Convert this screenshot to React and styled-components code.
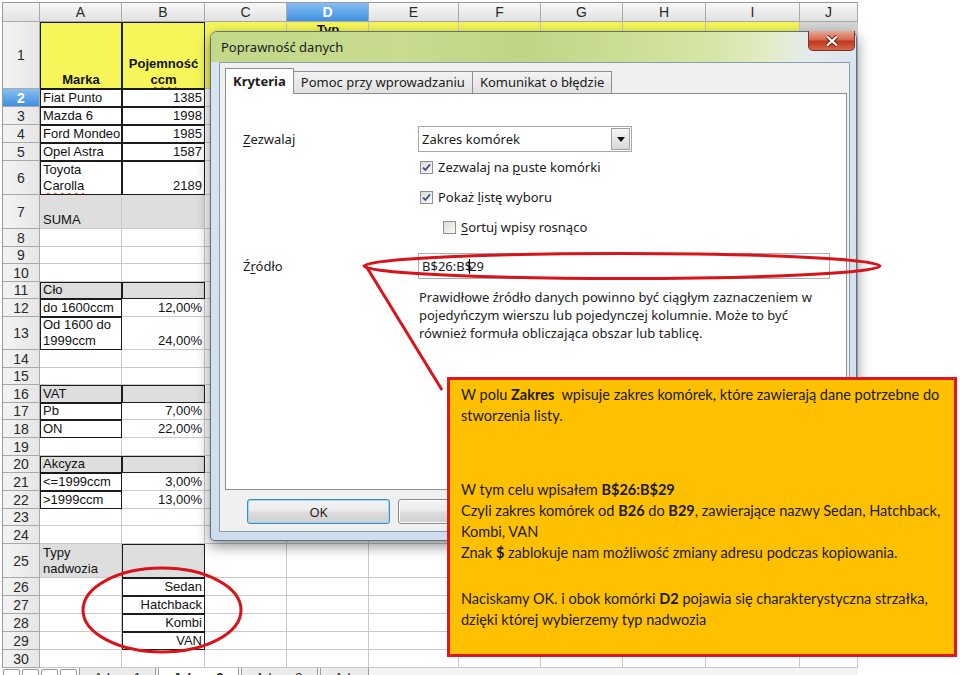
import styled, { createGlobalStyle, css } from "styled-components";

const COLS = ["A", "B", "C", "D", "E", "F", "G", "H", "I", "J"];
const COL_W = [82, 83, 82, 82, 90, 82, 82, 83, 94, 58];
const ROW_H = [67, 18, 18, 18, 18, 34, 34, 18, 17, 18, 17, 18, 33, 18, 17, 18, 17, 18, 18, 17, 18, 18, 17, 18, 34, 18, 18, 18, 18, 18];

const YELLOW = "#f6f65a";
const GRAY = "#dedede";

const GlobalStyle = createGlobalStyle`
  html, body {
    margin: 0;
    padding: 0;
    background: #fff;
  }
  body {
    width: 960px;
    height: 675px;
    overflow: hidden;
    font-family: "Liberation Sans", Arial, sans-serif;
  }
`;

const Spell = styled.span`
  text-decoration: underline wavy #e0281e;
  text-decoration-thickness: 1px;
  text-underline-offset: 2px;
`;

const CELLS = {
  A1: { text: "Marka", bg: YELLOW, bold: true, align: "center", boxed: true },
  B1: {
    text: (
      <>
        Pojemność
        <br />
        <Spell>ccm</Spell>
      </>
    ),
    bg: YELLOW,
    bold: true,
    align: "center",
    boxed: true,
  },
  C1: { bg: YELLOW },
  D1: { text: "Typ nadwozia", bg: YELLOW, bold: true, align: "center", top: true, wrap: true },
  E1: { bg: YELLOW },
  F1: { bg: YELLOW },
  G1: { bg: YELLOW },
  H1: { bg: YELLOW },
  I1: { bg: YELLOW },
  J1: { bg: "#d4d4d4" },
  A2: { text: "Fiat Punto", boxed: true },
  B2: { text: "1385", align: "right", boxed: true },
  A3: { text: "Mazda 6", boxed: true },
  B3: { text: "1998", align: "right", boxed: true },
  A4: { text: "Ford Mondeo", boxed: true },
  B4: { text: "1985", align: "right", boxed: true },
  A5: { text: "Opel Astra", boxed: true },
  B5: { text: "1587", align: "right", boxed: true },
  A6: {
    text: (
      <>
        Toyota
        <br />
        <Spell>Carolla</Spell>
      </>
    ),
    boxed: true,
  },
  B6: { text: "2189", align: "right", boxed: true },
  A7: { text: "SUMA", bg: GRAY },
  B7: { bg: GRAY },
  A11: { text: "Cło", bg: GRAY, boxed: true },
  B11: { bg: GRAY, boxed: true },
  A12: { text: "do 1600ccm", boxed: true },
  B12: { text: "12,00%", align: "right" },
  A13: {
    text: (
      <>
        Od 1600 do
        <br />
        1999ccm
      </>
    ),
    boxed: true,
  },
  B13: { text: "24,00%", align: "right" },
  A16: { text: "VAT", bg: GRAY, boxed: true },
  B16: { bg: GRAY, boxed: true },
  A17: { text: "Pb", boxed: true },
  B17: { text: "7,00%", align: "right" },
  A18: { text: "ON", boxed: true },
  B18: { text: "22,00%", align: "right" },
  A20: { text: "Akcyza", bg: GRAY, boxed: true },
  B20: { bg: GRAY, boxed: true },
  A21: { text: "<=1999ccm", boxed: true },
  B21: { text: "3,00%", align: "right" },
  A22: { text: ">1999ccm", boxed: true },
  B22: { text: "13,00%", align: "right" },
  A25: {
    text: (
      <>
        Typy
        <br />
        nadwozia
      </>
    ),
    bg: GRAY,
  },
  B25: { bg: GRAY, boxed: true },
  B26: { text: "Sedan", align: "right", boxed: true },
  B27: { text: "Hatchback", align: "right", boxed: true },
  B28: { text: "Kombi", align: "right", boxed: true },
  B29: { text: "VAN", align: "right", boxed: true },
};

const Page = styled.div`
  position: relative;
  width: 960px;
  height: 675px;
  overflow: hidden;
  padding: 2px 0 0 2px;
  box-sizing: border-box;
  background: #fff;
`;

const Workbook = styled.div`
  width: 856px;
  display: flex;
  flex-direction: column;
`;

const Grid = styled.div`
  display: grid;
  grid-template-columns: 37px ${COL_W.map((w) => w + "px").join(" ")};
  grid-template-rows: 19px ${ROW_H.map((h) => h + "px").join(" ")};
  border-top: 1px solid #9a9a9a;
  border-left: 1px solid #9a9a9a;
  font-size: 13px;
  color: #111;
`;

const headBase = css`
  box-sizing: border-box;
  border-right: 1px solid #a9a9a9;
  border-bottom: 1px solid #a9a9a9;
  display: flex;
  align-items: center;
  justify-content: center;
  color: #2a2a2a;
  font-size: 14px;
`;

const Corner = styled.div`
  ${headBase};
  background: linear-gradient(#f6f6f6, #e2e2e2);
`;

const ColHead = styled.div`
  ${headBase};
  background: linear-gradient(#f8f8f8, #e1e1e1);
  ${(p) =>
    p.$sel &&
    css`
      background: linear-gradient(#86bff3, #3f8fe0);
      color: #fff;
      font-weight: 700;
    `}
`;

const RowHead = styled.div`
  ${headBase};
  background: linear-gradient(to right, #f4f4f4, #e6e6e6);
  ${(p) =>
    p.$sel &&
    css`
      background: linear-gradient(#86bff3, #3f8fe0);
      color: #fff;
      font-weight: 700;
    `}
`;

const Cell = styled.div`
  box-sizing: border-box;
  border-right: 1px solid #c9c9c9;
  border-bottom: 1px solid #c9c9c9;
  background: ${(p) => p.$bg || "#fff"};
  display: flex;
  flex-direction: column;
  justify-content: ${(p) => (p.$top ? "flex-start" : "flex-end")};
  text-align: ${(p) => p.$align || "left"};
  font-weight: ${(p) => (p.$bold ? 700 : 400)};
  padding: 0 2px 0 3px;
  line-height: 16px;
  white-space: ${(p) => (p.$wrap ? "normal" : "nowrap")};
  overflow: hidden;
  ${(p) =>
    p.$boxed &&
    css`
      outline: 1px solid #1c1c1c;
      outline-offset: -1px;
    `}
`;

const SheetTabs = styled.div`
  height: 20px;
  display: flex;
  align-items: flex-start;
  gap: 2px;
  padding: 0 0 0 1px;
  background: #f4f4f4;
  font-size: 13px;
`;

const NavBtn = styled.span`
  width: 17px;
  height: 14px;
  box-sizing: border-box;
  border: 1px solid #9c9c9c;
  border-radius: 2px;
  background: #fff;
  margin-top: 1px;
`;

const SheetTab = styled.span`
  padding: 0 14px;
  height: 18px;
  line-height: 20px;
  border: 1px solid #9a9a9a;
  border-top: none;
  background: ${(p) => (p.$active ? "#fff" : "#ececec")};
  font-weight: ${(p) => (p.$active ? 700 : 400)};
  color: #222;
`;

/* dialog */

const Dialog = styled.div`
  position: absolute;
  left: 210px;
  top: 31px;
  width: 647px;
  height: 510px;
  box-sizing: border-box;
  border: 1px solid #5d6f82;
  border-radius: 7px 7px 4px 4px;
  background: linear-gradient(#d9e6f1, #cfdeec);
  box-shadow: 0 5px 14px rgba(0, 0, 0, 0.45);
  display: flex;
  flex-direction: column;
  font-family: "Noto Sans", "Open Sans", sans-serif;
  font-size: 13px;
  color: #1b1b1b;
`;

const TitleBar = styled.div`
  height: 30px;
  display: flex;
  align-items: flex-start;
  border-radius: 6px 6px 0 0;
  background: linear-gradient(
    to right,
    #c3d888 0%,
    #c8db8f 30%,
    #bfd585 48%,
    #cadd93 62%,
    #d6e6a8 78%,
    #e2ecc4 86%,
    #e3ebee 93%,
    #dbe5ee 100%
  );
`;

const Title = styled.span`
  padding-left: 10px;
  line-height: 30px;
  font-size: 13px;
  color: #1a1a1a;
`;

const CloseButton = styled.span`
  margin-left: auto;
  margin-right: 1px;
  margin-top: -1px;
  width: 47px;
  height: 20px;
  box-sizing: border-box;
  border: 1px solid #7c3326;
  border-top: none;
  border-radius: 0 0 5px 5px;
  background: linear-gradient(#e7a896 0%, #d66a52 45%, #c2361d 55%, #d6684a 100%);
  display: flex;
  align-items: center;
  justify-content: center;
`;

const Client = styled.div`
  flex: 1;
  margin: 0 6px 8px 8px;
  border: 1px solid #8a9cb0;
  background: #f0f0f0;
  padding: 5px 2px 0 5px;
  display: flex;
  flex-direction: column;
`;

const Tabs = styled.div`
  display: flex;
  align-items: flex-end;
  height: 25px;
  position: relative;
  z-index: 1;
`;

const Tab = styled.span`
  box-sizing: border-box;
  border: 1px solid #8c8e94;
  border-bottom: none;
  padding: 0 7px;
  height: ${(p) => (p.$active ? "26px" : "22px")};
  margin-bottom: ${(p) => (p.$active ? "-1px" : "0")};
  line-height: ${(p) => (p.$active ? "24px" : "21px")};
  background: ${(p) => (p.$active ? "#fff" : "linear-gradient(#f3f3f3, #e0e0e0)")};
  font-weight: ${(p) => (p.$active ? 700 : 400)};
  & + & {
    border-left: none;
  }
`;

const Panel = styled.div`
  box-sizing: border-box;
  width: 622px;
  height: 397px;
  border: 1px solid #8c8e94;
  background: #fff;
  padding: 32px 0 0 17px;
  display: grid;
  grid-template-columns: 175px 1fr;
  align-content: start;
`;

const Label = styled.span`
  display: flex;
  align-items: center;
  margin-top: ${(p) => p.$mt || 0}px;
`;

const Key = styled.span`
  text-decoration: underline;
  text-underline-offset: 2px;
`;

const Select = styled.div`
  width: 214px;
  height: 26px;
  box-sizing: border-box;
  border: 1px solid #a5a7ab;
  display: flex;
  align-items: center;
  padding-left: 3px;
`;

const DropBtn = styled.span`
  margin-left: auto;
  margin-right: 1px;
  width: 19px;
  height: 22px;
  box-sizing: border-box;
  border: 1px solid #a0a0a0;
  background: linear-gradient(#f4f4f4, #d9d9d9);
  display: flex;
  align-items: center;
  justify-content: center;
`;

const CheckRow = styled.label`
  grid-column: 2;
  height: 30px;
  display: flex;
  align-items: center;
  padding-left: ${(p) => (p.$indent ? 25 : 2)}px;
`;

const CheckBox = styled.span`
  width: 13px;
  height: 13px;
  box-sizing: border-box;
  border: 1px solid #8e8f8f;
  background: linear-gradient(135deg, #dadada, #fbfbfb);
  display: inline-flex;
  align-items: center;
  justify-content: center;
  margin-right: 5px;
`;

const Input = styled.div`
  margin-top: 11px;
  width: 412px;
  height: 26px;
  box-sizing: border-box;
  border: 1px solid #abadb3;
  display: flex;
  align-items: center;
  padding-left: 3px;
`;

const Caret = styled.span`
  display: inline-block;
  width: 1px;
  height: 15px;
  background: #000;
  margin: 0 -1px 0 -3px;
`;

const Hint = styled.p`
  grid-column: 2;
  margin: 9px 0 0 1px;
  line-height: 18px;
  white-space: nowrap;
  color: #222;
`;

const ButtonRow = styled.div`
  display: flex;
  gap: 8px;
  margin-top: 9px;
  padding-left: 22px;
`;

const DlgButton = styled.span`
  width: 143px;
  height: 25px;
  box-sizing: border-box;
  border: 1px solid ${(p) => (p.$focus ? "#3c8cc4" : "#8a8a8a")};
  border-radius: 3px;
  background: linear-gradient(#f3f3f3 0%, #ebebeb 48%, #dcdcdc 52%, #cfcfcf 100%);
  box-shadow: inset 0 0 0 1px ${(p) => (p.$focus ? "#9fd6f5" : "#fcfcfc")};
  display: flex;
  align-items: center;
  justify-content: center;
`;

/* overlays */

const Callout = styled.div`
  position: absolute;
  left: 447px;
  top: 377px;
  width: 510px;
  height: 280px;
  box-sizing: border-box;
  border: 3px solid #e3171b;
  background: #ffc000;
  padding: 4px 8px 0 11px;
  font-family: Lato, "Noto Sans", sans-serif;
  font-size: 14.5px;
  line-height: 21px;
  color: #1a1a1a;
  white-space: pre;
`;

const Para = styled.p`
  margin: ${(p) => p.$mt || 0}px 0 0 0;
`;

const Marks = styled.svg`
  position: absolute;
  left: 0;
  top: 0;
  pointer-events: none;
`;

function Check() {
  return (
    <svg width="9" height="9" viewBox="0 0 9 9">
      <path d="M1 4.6 L3.4 7 L8 1.4" fill="none" stroke="#3a4f8c" strokeWidth="1.8" />
    </svg>
  );
}

export default function App() {
  return (
    <>
      <GlobalStyle />
      <Page>
        <Workbook>
          <Grid>
            <Corner />
            {COLS.map((c) => (
              <ColHead key={c} $sel={c === "D"}>
                {c}
              </ColHead>
            ))}
            {ROW_H.map((_, i) => {
              const r = i + 1;
              return [
                <RowHead key={"r" + r} $sel={r === 2}>
                  {r}
                </RowHead>,
                ...COLS.map((c) => {
                  const d = CELLS[c + r] || {};
                  return (
                    <Cell
                      key={c + r}
                      $bg={d.bg}
                      $bold={d.bold}
                      $align={d.align}
                      $boxed={d.boxed}
                      $top={d.top}
                      $wrap={d.wrap}
                    >
                      {d.text && <span>{d.text}</span>}
                    </Cell>
                  );
                }),
              ];
            })}
          </Grid>
          <SheetTabs>
            <NavBtn />
            <NavBtn />
            <NavBtn />
            <NavBtn />
            <SheetTab>Arkusz1</SheetTab>
            <SheetTab $active>Arkusz2</SheetTab>
            <SheetTab>Arkusz3</SheetTab>
            <SheetTab>Ark</SheetTab>
          </SheetTabs>
        </Workbook>

        <Dialog>
          <TitleBar>
            <Title>Poprawność danych</Title>
            <CloseButton>
              <svg width="16" height="12" viewBox="0 0 16 12">
                <path d="M3 1.5 L13 10.5 M13 1.5 L3 10.5" stroke="#6a1d12" strokeWidth="4" />
                <path d="M3 1.5 L13 10.5 M13 1.5 L3 10.5" stroke="#fff" strokeWidth="2.2" />
              </svg>
            </CloseButton>
          </TitleBar>
          <Client>
            <Tabs>
              <Tab $active>Kryteria</Tab>
              <Tab>Pomoc przy wprowadzaniu</Tab>
              <Tab>Komunikat o błędzie</Tab>
            </Tabs>
            <Panel>
              <Label>
                <span>
                  <Key>Z</Key>ezwalaj
                </span>
              </Label>
              <Select>
                Zakres komórek
                <DropBtn>
                  <svg width="8" height="5" viewBox="0 0 8 5">
                    <path d="M0 0 H8 L4 5 Z" fill="#111" />
                  </svg>
                </DropBtn>
              </Select>
              <CheckRow>
                <CheckBox>
                  <Check />
                </CheckBox>
                <span>
                  Zezwalaj na <Key>p</Key>uste komórki
                </span>
              </CheckRow>
              <CheckRow>
                <CheckBox>
                  <Check />
                </CheckBox>
                <span>
                  Pokaż <Key>l</Key>istę wyboru
                </span>
              </CheckRow>
              <CheckRow $indent>
                <CheckBox />
                <span>
                  <Key>S</Key>ortuj wpisy rosnąco
                </span>
              </CheckRow>
              <Label $mt={11}>
                <span>
                  Ź<Key>r</Key>ódło
                </span>
              </Label>
              <Input>
                B$26:B$<Caret />
                29
              </Input>
              <Hint>
                Prawidłowe źródło danych powinno być ciągłym zaznaczeniem w
                <br />
                pojedyńczym wierszu lub pojedynczej kolumnie. Może to być
                <br />
                również formuła obliczająca obszar lub tablicę.
              </Hint>
            </Panel>
            <ButtonRow>
              <DlgButton $focus>OK</DlgButton>
              <DlgButton />
            </ButtonRow>
          </Client>
        </Dialog>

        <Callout>
          <Para>
            W polu <b>Zakres</b>  wpisuje zakres komórek, które zawierają dane potrzebne do
            {"\n"}stworzenia listy.
          </Para>
          <Para $mt={53}>
            W tym celu wpisałem <b>B$26:B$29</b>
            {"\n"}Czyli zakres komórek od <b>B26</b> do <b>B29</b>, zawierające nazwy Sedan, Hatchback,
            {"\n"}Kombi, VAN
            {"\n"}Znak <b>$</b> zablokuje nam możliwość zmiany adresu podczas kopiowania.
          </Para>
          <Para $mt={25}>
            Naciskamy OK. i obok komórki <b>D2</b> pojawia się charakterystyczna strzałka,
            {"\n"}dzięki której wybierzemy typ nadwozia
          </Para>
        </Callout>

        <Marks width="960" height="675" viewBox="0 0 960 675">
          <g fill="none" stroke="#d8141b" strokeWidth="3">
            <ellipse cx="622" cy="266" rx="258" ry="12.5" />
            <path d="M366 266 L442 390" />
            <ellipse cx="162" cy="610" rx="79" ry="42" />
          </g>
        </Marks>
      </Page>
    </>
  );
}
